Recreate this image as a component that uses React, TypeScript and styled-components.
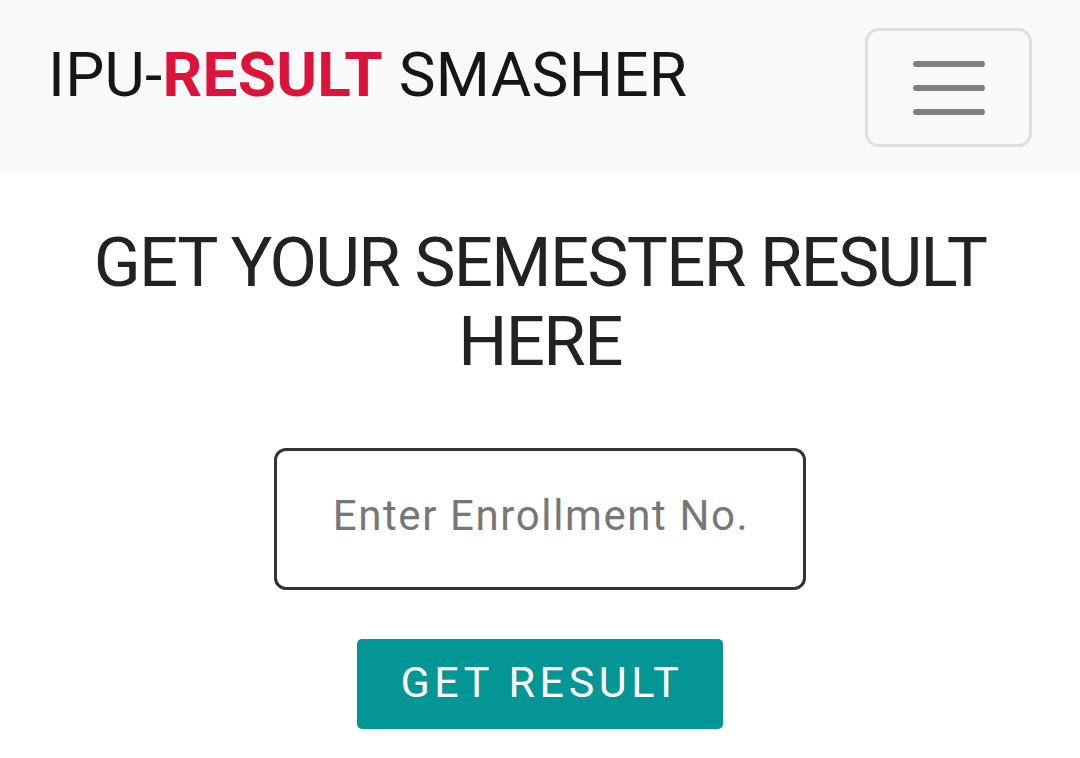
import React from "react";
import styled, { createGlobalStyle } from "styled-components";

const Global = createGlobalStyle`
  html, body { margin: 0; padding: 0; background: #ffffff; }
  body { font-family: Roboto, "Noto Sans", sans-serif; }
  * { box-sizing: border-box; }
`;

const Navbar = styled.nav`
  display: flex;
  justify-content: space-between;
  align-items: flex-start;
  height: 173px;
  padding: 28px 48px 0 48px;
  background: #f8f9fa;
`;

const Brand = styled.a`
  margin-top: 16px;
  font-size: 62px;
  line-height: 1;
  letter-spacing: 0.3px;
  color: #161616;
  text-decoration: none;
  white-space: nowrap;
`;

const Accent = styled.span`
  color: #dc143c;
  font-weight: 700;
`;

const Toggler = styled.button`
  display: flex;
  align-items: center;
  justify-content: center;
  width: 167px;
  height: 119px;
  padding: 0;
  background: transparent;
  border: 3px solid #dcdee1;
  border-radius: 14px;
`;

const Main = styled.main`
  display: flex;
  flex-direction: column;
  align-items: center;
  padding: 50px 40px 0;
  text-align: center;
`;

const Heading = styled.h1`
  margin: 0;
  max-width: 960px;
  font-size: 69px;
  line-height: 79px;
  letter-spacing: -1.7px;
  font-weight: 400;
  color: #222222;
`;

const Field = styled.input`
  margin-top: 67px;
  width: 532px;
  height: 142px;
  padding: 0 0 7px 2px;
  border: 3px solid #333333;
  border-radius: 12px;
  background: #fff;
  font-family: Roboto, "Noto Sans", sans-serif;
  font-size: 42px;
  letter-spacing: 1.6px;
  text-align: center;
  color: #333;
  outline: none;
  &::placeholder { color: #777777; }
`;

const Submit = styled.button`
  margin-top: 49px;
  width: 366px;
  height: 90px;
  padding: 0 0 4px 4px;
  border: none;
  border-radius: 5px;
  background: #049694;
  color: #ffffff;
  font-family: Roboto, "Noto Sans", sans-serif;
  font-size: 43px;
  letter-spacing: 4.6px;
  font-weight: 400;
`;

export default function App() {
  return (
    <>
      <Global />
      <Navbar>
        <Brand href="#">
          IPU-<Accent>RESULT</Accent> SMASHER
        </Brand>
        <Toggler aria-label="Toggle navigation">
          <svg width="72" height="54" viewBox="0 0 72 54">
            <g stroke="#808080" strokeWidth="6" strokeLinecap="round">
              <line x1="3" y1="3" x2="69" y2="3" />
              <line x1="3" y1="27" x2="69" y2="27" />
              <line x1="3" y1="51" x2="69" y2="51" />
            </g>
          </svg>
        </Toggler>
      </Navbar>
      <Main>
        <Heading>GET YOUR SEMESTER RESULT HERE</Heading>
        <Field type="text" placeholder="Enter Enrollment No." />
        <Submit>GET RESULT</Submit>
      </Main>
    </>
  );
}
